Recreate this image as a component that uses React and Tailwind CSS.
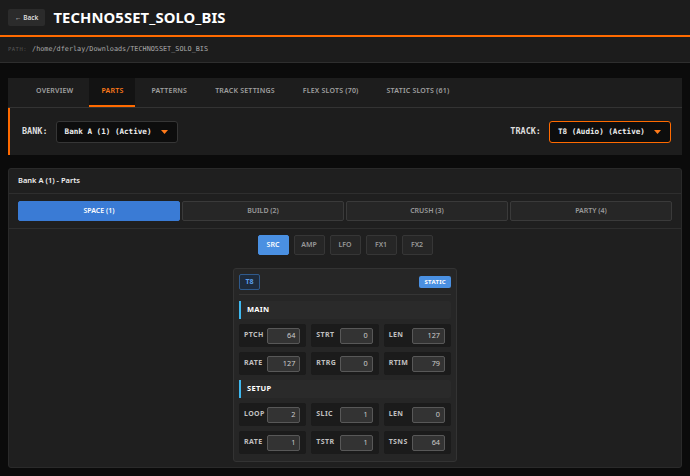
import { useState } from 'react';

const TABS = ['OVERVIEW', 'PARTS', 'PATTERNS', 'TRACK SETTINGS', 'FLEX SLOTS (70)', 'STATIC SLOTS (61)'];
const PARTS = ['SPACE (1)', 'BUILD (2)', 'CRUSH (3)', 'PARTY (4)'];
const PAGES = ['SRC', 'AMP', 'LFO', 'FX1', 'FX2'];

const MAIN = [
  ['PTCH', 64], ['STRT', 0], ['LEN', 127],
  ['RATE', 127], ['RTRG', 0], ['RTIM', 79],
];
const SETUP = [
  ['LOOP', 2], ['SLIC', 1], ['LEN', 0],
  ['RATE', 1], ['TSTR', 1], ['TSNS', 64],
];

function Caret() {
  return (
    <svg width="7" height="4" viewBox="0 0 7 4" className="shrink-0">
      <path d="M0 0h7L3.5 4z" fill="#ff7a1a" />
    </svg>
  );
}

function Select({ value, active }) {
  return (
    <div
      className={`flex items-center justify-between w-[122px] h-[22px] pl-[8px] pr-[9px] rounded-[3px] bg-[#0d0d0d] font-['DejaVu_Sans_Mono',monospace] text-[7.6px] font-bold text-[#eeeeee] whitespace-nowrap ${
        active ? 'border-[1.5px] border-[#ff6a00]' : 'border border-[#363636]'
      }`}
    >
      <span>{value}</span>
      <Caret />
    </div>
  );
}

function SectionHeader({ children }) {
  return (
    <div className="h-[18px] flex items-center bg-[#2a2a2a] border-l-2 border-[#3fb8ef] rounded-r-[2px] pl-[6px] text-[7.5px] font-bold text-white tracking-[0.3px]">
      {children}
    </div>
  );
}

function ParamGrid({ params }) {
  return (
    <div className="grid grid-cols-3 gap-x-[5px] gap-y-[5px]">
      {params.map(([label, value], i) => (
        <div key={i} className="h-[23px] flex items-center justify-between bg-[#1b1b1b] rounded-[2px] pl-[5px] pr-[6px]">
          <span className="text-[7px] font-bold text-[#c0c0c0] tracking-[0.4px]">{label}</span>
          <div className="w-[33px] h-[16px] flex items-center justify-end pr-[4px] bg-[#333333] border border-[#585858] rounded-[2px] text-[7.3px] text-[#cccccc]">
            {value}
          </div>
        </div>
      ))}
    </div>
  );
}

export default function App() {
  const [tab, setTab] = useState('PARTS');
  const [part, setPart] = useState(0);
  const [page, setPage] = useState('SRC');

  return (
    <div className="w-[690px] h-[476px] overflow-hidden bg-[#0b0b0b] font-['Noto_Sans',sans-serif] text-white">
      {/* Header */}
      <div className="h-[37px] bg-[#1c1c1c] flex items-center gap-[8px] px-[8px] border-b-2 border-[#ff6a00]">
        <button className="h-[17px] px-[7px] bg-[#2b2b2b] rounded-[2px] text-[6.5px] font-semibold text-[#dddddd]">
          ← Back
        </button>
        <h1 className="text-[14.8px] font-bold text-white tracking-[0.1px]">TECHNO5SET_SOLO_BIS</h1>
      </div>

      {/* Path */}
      <div className="h-[26px] bg-[#1c1c1c] border-b border-[#2e2e2e] flex items-center gap-[5px] px-[8px]">
        <span className="font-['DejaVu_Sans_Mono',monospace] text-[5.5px] text-[#555555] tracking-[0.5px]">PATH:</span>
        <span className="font-['DejaVu_Sans_Mono',monospace] text-[6.8px] text-[#a8a8a8]">/home/dferlay/Downloads/TECHNO5SET_SOLO_BIS</span>
      </div>

      <div className="px-[8px] pt-[15px] flex flex-col gap-[13px]">
        {/* Tabs + selectors */}
        <div className="bg-[#1d1d1d]">
          <div className="h-[30px] flex items-stretch gap-[4px] pl-[16px] border-b border-[#333333]">
            {TABS.map((t) => (
              <button
                key={t}
                onClick={() => setTab(t)}
                className={`px-[12px] text-[7px] font-semibold tracking-[0.2px] border-b-2 ${
                  tab === t ? 'bg-[#131313] text-[#ff7a1a] border-[#ff6a00]' : 'text-[#a0a0a0] border-transparent'
                }`}
              >
                {t}
              </button>
            ))}
          </div>
          <div className="h-[47px] flex items-center justify-between border-l-2 border-[#ff6a00] pl-[12px] pr-[11px]">
            <div className="flex items-center gap-[8px]">
              <span className="font-['DejaVu_Sans_Mono',monospace] text-[8.5px] font-bold text-[#dddddd]">BANK:</span>
              <Select value="Bank A (1) (Active)" />
            </div>
            <div className="flex items-center gap-[8px]">
              <span className="font-['DejaVu_Sans_Mono',monospace] text-[8.5px] font-bold text-[#dddddd]">TRACK:</span>
              <Select value="T8 (Audio) (Active)" active />
            </div>
          </div>
        </div>

        {/* Parts panel */}
        <div className="bg-[#1f1f1f] border border-[#2a2a2a] rounded-[3px] h-[300px]">
          <div className="h-[25px] flex items-center px-[9px] border-b border-[#2e2e2e] text-[7.5px] font-semibold text-[#eeeeee]">
            Bank A (1) - Parts
          </div>
          <div className="grid grid-cols-4 gap-[2px] px-[9px] py-[7px] border-b border-[#2e2e2e]">
            {PARTS.map((p, i) => (
              <button
                key={p}
                onClick={() => setPart(i)}
                className={`h-[20px] rounded-[2px] text-[7px] font-semibold ${
                  part === i
                    ? 'bg-[#3a7bd5] text-white border border-[#3a7bd5]'
                    : 'bg-[#262626] text-[#9a9a9a] border border-[#3a3a3a]'
                }`}
              >
                {p}
              </button>
            ))}
          </div>
          <div className="flex justify-center gap-[5px] pt-[6px] pb-[7px]">
            {PAGES.map((p) => (
              <button
                key={p}
                onClick={() => setPage(p)}
                className={`w-[31px] h-[20px] rounded-[2px] text-[7px] font-semibold ${
                  page === p
                    ? 'bg-[#4a90e2] text-white border border-[#4a90e2]'
                    : 'bg-[#262626] text-[#999999] border border-[#363636]'
                }`}
              >
                {p}
              </button>
            ))}
          </div>

          {/* Track card */}
          <div className="flex justify-center pt-[6px]">
            <div className="w-[224px] bg-[#262626] border border-[#333333] rounded-[3px] px-[5px] pt-[5px] pb-[7px]">
              <div className="flex items-center justify-between pb-[4px] border-b border-[#353535]">
                <span className="w-[21px] h-[16px] flex items-center justify-center rounded-[2px] bg-[#1e2b3c] border border-[#2f5a8c] text-[7px] font-bold text-[#5a9eea]">
                  T8
                </span>
                <span className="h-[12px] px-[5px] flex items-center rounded-[2px] bg-[#4a90e2] text-[6px] font-bold text-white tracking-[0.3px]">
                  STATIC
                </span>
              </div>
              <div className="flex flex-col gap-[5px] pt-[6px]">
                <SectionHeader>MAIN</SectionHeader>
                <ParamGrid params={MAIN} />
                <SectionHeader>SETUP</SectionHeader>
                <ParamGrid params={SETUP} />
              </div>
            </div>
          </div>
        </div>
      </div>
    </div>
  );
}
